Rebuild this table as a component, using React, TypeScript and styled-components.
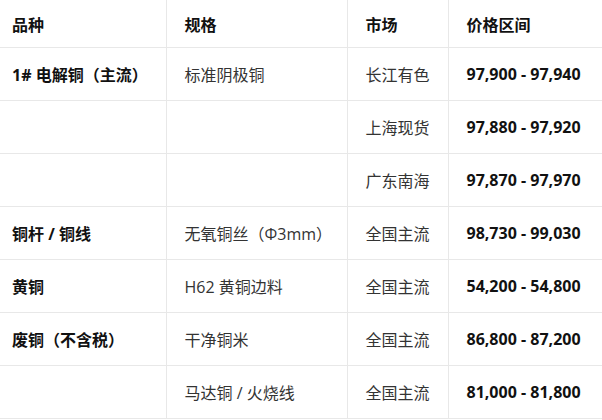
import React from 'react';
import styled, { createGlobalStyle } from 'styled-components';

const GlobalStyle = createGlobalStyle`
  body {
    margin: 0;
    background: #ffffff;
    font-family: "Open Sans", "Noto Sans CJK SC", sans-serif;
  }
`;

const Table = styled.table`
  width: 602px;
  border-collapse: collapse;
  table-layout: fixed;
  font-size: 16px;
  color: #333333;
`;

const Th = styled.th<{ $w: number; $first?: boolean }>`
  box-sizing: border-box;
  width: ${(p) => p.$w}px;
  height: 47px;
  padding: 1px 0 0 ${(p) => (p.$first ? 12 : 18)}px;
  text-align: left;
  font-weight: 700;
  color: #111111;
  border-right: 1px solid #e8e8e8;
  border-bottom: 1px solid #e8e8e8;
`;

const Td = styled.td<{ $first?: boolean; $bold?: boolean }>`
  box-sizing: border-box;
  height: 53px;
  padding: 1px 0 0 ${(p) => (p.$first ? 12 : 18)}px;
  font-weight: ${(p) => (p.$bold ? 700 : 400)};
  color: ${(p) => (p.$bold ? '#111111' : '#333333')};
  border-right: 1px solid #e8e8e8;
  border-bottom: 1px solid #e8e8e8;
  white-space: nowrap;
`;

type Row = { kind: string; spec: string; market: string; price: string };

const rows: Row[] = [
  { kind: '1# 电解铜（主流）', spec: '标准阴极铜', market: '长江有色', price: '97,900 - 97,940' },
  { kind: '', spec: '', market: '上海现货', price: '97,880 - 97,920' },
  { kind: '', spec: '', market: '广东南海', price: '97,870 - 97,970' },
  { kind: '铜杆 / 铜线', spec: '无氧铜丝（Φ3mm）', market: '全国主流', price: '98,730 - 99,030' },
  { kind: '黄铜', spec: 'H62 黄铜边料', market: '全国主流', price: '54,200 - 54,800' },
  { kind: '废铜（不含税）', spec: '干净铜米', market: '全国主流', price: '86,800 - 87,200' },
  { kind: '', spec: '马达铜 / 火烧线', market: '全国主流', price: '81,000 - 81,800' },
];

const App = () => {
  return (
    <>
      <GlobalStyle />
      <Table>
        <thead>
          <tr>
            <Th $w={166} $first>品种</Th>
            <Th $w={181}>规格</Th>
            <Th $w={101}>市场</Th>
            <Th $w={154}>价格区间</Th>
          </tr>
        </thead>
        <tbody>
          {rows.map((r, i) => (
            <tr key={i}>
              <Td $first $bold>{r.kind}</Td>
              <Td>{r.spec}</Td>
              <Td>{r.market}</Td>
              <Td $bold>{r.price}</Td>
            </tr>
          ))}
        </tbody>
      </Table>
    </>
  );
};

export default App;
